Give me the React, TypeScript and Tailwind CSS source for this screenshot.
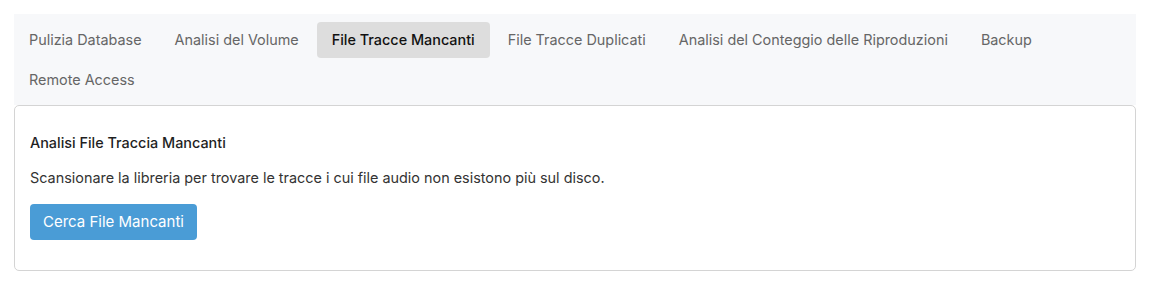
import React, { useState } from 'react';

const tabs = [
  'Pulizia Database',
  'Analisi del Volume',
  'File Tracce Mancanti',
  'File Tracce Duplicati',
  'Analisi del Conteggio delle Riproduzioni',
  'Backup',
  'Remote Access',
];

const App: React.FC = () => {
  const [active, setActive] = useState('File Tracce Mancanti');

  return (
    <main className="min-h-screen bg-white p-[14px] font-['Inter',sans-serif] text-[14.4px] leading-5">
      <nav className="flex flex-wrap gap-x-[3px] gap-y-1 bg-[#f7f8fa] pt-2 pb-[7px]">
        {tabs.map((tab) => (
          <button
            key={tab}
            onClick={() => setActive(tab)}
            className={
              tab === active
                ? 'h-9 rounded-[4px] bg-[#dddddd] px-[15px] font-medium text-[#111111]'
                : 'h-9 rounded-[4px] px-[15px] text-[#666666]'
            }
          >
            {tab}
          </button>
        ))}
      </nav>

      <section className="rounded-[5px] border border-[#d4d4d4] px-[15px] pt-[27px] pb-[30px]">
        <h3 className="font-medium text-[#1f1f1f]">Analisi File Traccia Mancanti</h3>
        <p className="mt-[15px] text-[#333333]">
          Scansionare la libreria per trovare le tracce i cui file audio non esistono più sul disco.
        </p>
        <button className="mt-4 h-9 rounded-[4px] bg-[#4a9cd6] px-[13px] text-[15px] text-white">
          Cerca File Mancanti
        </button>
      </section>
    </main>
  );
};

export default App;
